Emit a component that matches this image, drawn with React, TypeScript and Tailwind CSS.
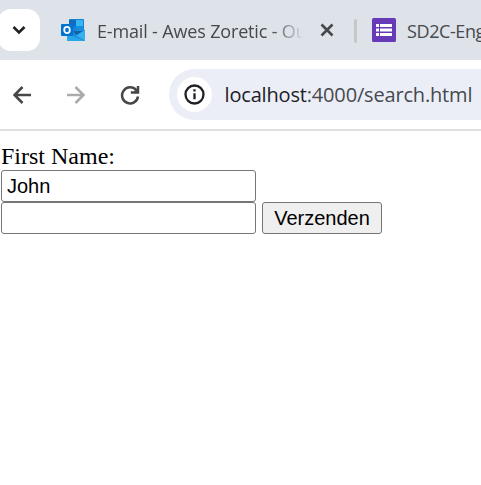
function OutlookIcon() {
  return (
    <svg width="24" height="22" viewBox="0 0 24 22" className="shrink-0">
      <rect x="8" y="0" width="15" height="13" rx="1" fill="#1482d4" />
      <rect x="8" y="1" width="7" height="6" fill="#0f6cc0" />
      <rect x="15" y="1" width="7" height="6" fill="#35b8f1" />
      <rect x="15" y="7" width="7" height="5" fill="#1490df" />
      <path d="M22 10l2 1v10a1 1 0 0 1-1 1H7a1 1 0 0 1-1-1v-9z" fill="#1b8fdd" />
      <path d="M12 12h10l-6.5 4.5z" fill="#1561a8" />
      <path d="M15 16.5l9-5.5v10.5z" fill="#35b1ee" />
      <path d="M6 15l17.5 7H7a1 1 0 0 1-1-1z" fill="#28a8ea" />
      <rect x="0" y="5" width="12" height="12" rx="1" fill="#0072cf" />
      <ellipse cx="6" cy="11" rx="2.8" ry="3.1" fill="none" stroke="#fff" strokeWidth="1.8" />
    </svg>
  );
}

function FormsIcon() {
  return (
    <svg width="24" height="24" viewBox="0 0 24 24" className="shrink-0">
      <rect width="24" height="24" rx="1.5" fill="#673ab7" />
      <path d="M4 6h3v3H4zM8 6h12v3H8zM4 10.5h3v3H4zM8 10.5h12v3H8zM4 15h3v3H4zM8 15h12v3H8z" fill="#fff" />
    </svg>
  );
}

function TabStrip() {
  return (
    <div className="flex h-[60px] items-start bg-[#dee2e9] font-['Open_Sans',sans-serif] text-[18px] text-[#46494d]">
      <div className="-ml-[2px] mt-[9px] flex h-[42px] w-[42px] shrink-0 items-center justify-center rounded-[13px] bg-white">
        <svg width="14" height="10" viewBox="0 0 14 10" fill="none" stroke="#1f2023" strokeWidth="2.6">
          <path d="M1.5 2l5.5 5.5L12.5 2" />
        </svg>
      </div>
      <div className="ml-[21px] mt-[19px]"><OutlookIcon /></div>
      <div className="ml-[12px] mt-[19px] w-[208px] shrink-0 overflow-hidden whitespace-nowrap leading-[25px] tracking-[-0.16px] [mask-image:linear-gradient(to_right,black_175px,transparent_207px)]">
        E-mail - Awes Zoretic - Outlook
      </div>
      <svg width="14" height="14" viewBox="0 0 14 14" fill="none" stroke="#46484b" strokeWidth="2.6" className="ml-[15px] mt-[23px] shrink-0">
        <path d="M1.5 1.5l11 11M12.5 1.5l-11 11" />
      </svg>
      <div className="ml-[20px] mt-[19px] h-[24px] w-[3px] shrink-0 rounded-sm bg-[#c6c7c9]" />
      <div className="ml-[15px] mt-[18px]"><FormsIcon /></div>
      <div className="ml-[11px] mt-[19px] whitespace-nowrap leading-[25px] tracking-[-0.4px]">SD2C-English</div>
    </div>
  );
}

function Toolbar() {
  return (
    <div className="flex h-[71px] items-start border-b-2 border-[#dfdfdf] bg-white pl-[13px] pt-[9px]">
      <div className="flex h-[51px] shrink-0 items-center">
        <svg width="18" height="18" viewBox="0 0 18 18" fill="none" stroke="#474747" strokeWidth="2.6">
          <path d="M18 9H2M9.5 1L1.5 9l8 8" />
        </svg>
        <svg width="18" height="18" viewBox="0 0 18 18" fill="none" stroke="#ababab" strokeWidth="2.6" className="ml-[36px]">
          <path d="M0 9h16M8.5 1l8 8-8 8" />
        </svg>
        <svg width="20" height="20" viewBox="0 0 20 20" fill="none" stroke="#474747" strokeWidth="2.5" className="ml-[35px]">
          <path d="M16.2 5.2A8 8 0 1 0 18 11.5M18 1v6.6h-7.2" />
          <path d="M18 2.5v5h-5z" fill="#474747" stroke="none" />
        </svg>
      </div>
      <div className="ml-[29px] flex h-[51px] flex-1 items-center rounded-l-full bg-[#ebeef7] pl-[8px]">
        <div className="flex h-[35px] w-[35px] shrink-0 items-center justify-center rounded-full bg-white">
          <svg width="21" height="21" viewBox="0 0 21 21" fill="none" stroke="#202124" strokeWidth="2.3">
            <circle cx="10.5" cy="10.5" r="9" />
            <path d="M10.5 9.3v6M10.5 5.3v2.3" />
          </svg>
        </div>
        <span className="ml-[12.5px] whitespace-nowrap font-['Open_Sans',sans-serif] text-[20px] leading-[28px] tracking-[-0.17px] text-[#46494d]">
          <span className="text-[#202124]">localhost</span>:4000/search.html
        </span>
      </div>
    </div>
  );
}

export default function App() {
  return (
    <div className="h-[485px] w-[481px] overflow-hidden bg-white">
      <TabStrip />
      <Toolbar />
      <form className="pl-px pt-[12px] text-black" onSubmit={(e) => e.preventDefault()}>
        <label htmlFor="fname" className="block h-[27px] font-['Liberation_Serif',serif] text-[24px] leading-[27px]">
          First Name:
        </label>
        <input
          id="fname"
          defaultValue="John"
          className="block h-[32px] w-[255px] rounded-[3px] border border-[#767676] bg-white px-[5px] font-['Liberation_Sans',sans-serif] text-[20px] outline-none"
        />
        <div className="flex gap-[6px]">
          <input className="h-[32px] w-[255px] rounded-[3px] border border-[#767676] bg-white px-[5px] outline-none" />
          <button
            type="submit"
            className="h-[32px] w-[120px] rounded-[3px] border border-[#767676] bg-[#efefef] font-['Liberation_Sans',sans-serif] text-[20px] leading-[30px]"
          >
            Verzenden
          </button>
        </div>
      </form>
    </div>
  );
}
